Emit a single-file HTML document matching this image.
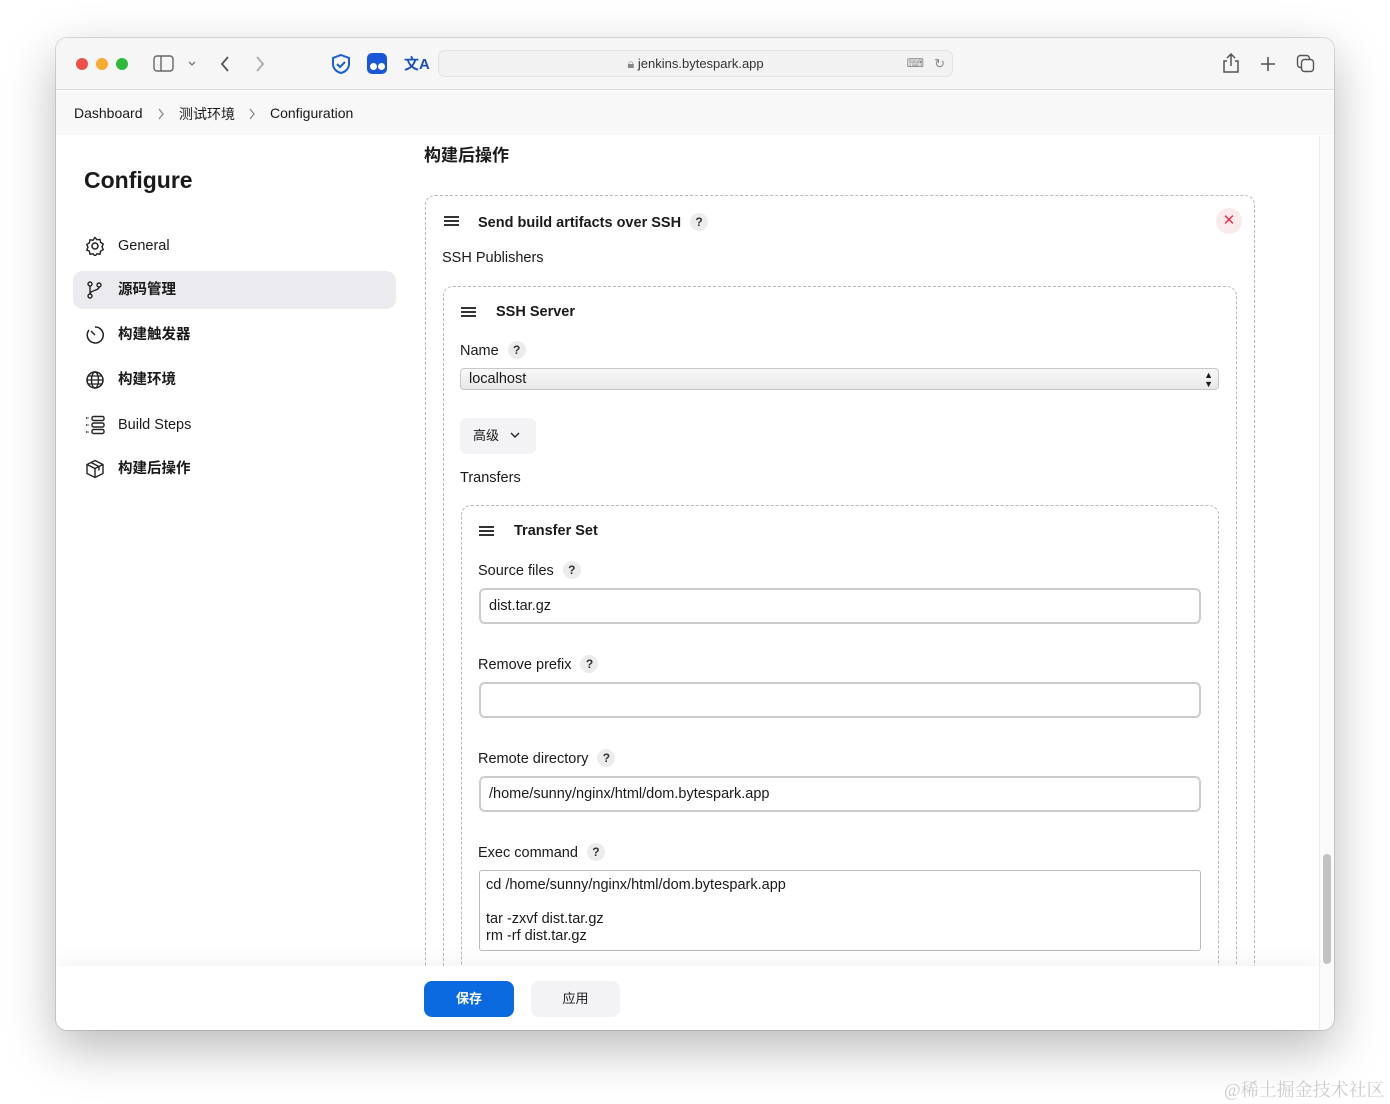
<!DOCTYPE html>
<html><head><meta charset="utf-8">
<style>
*{box-sizing:border-box;margin:0;padding:0}
body{width:1390px;height:1104px;background:#fff;font-family:"Liberation Sans","Noto Sans CJK SC",sans-serif;color:#1a1a1a;position:relative;overflow:hidden;font-size:14.5px}
.win{position:absolute;left:56px;top:38px;width:1278px;height:992px;border-radius:11px;background:#fff;overflow:hidden;box-shadow:0 18px 50px rgba(0,0,0,.28),0 0 0 1px rgba(0,0,0,.12)}
.tb{position:absolute;left:0;top:0;width:100%;height:52px;background:#f6f6f6;border-bottom:1px solid #dcdcdc}
.dot{position:absolute;top:20px;width:12px;height:12px;border-radius:50%}
.abs{position:absolute}
.url{position:absolute;left:382px;top:12px;width:515px;height:27px;border:1px solid #e2e2e2;border-radius:7px;background:#f2f2f2;font-size:13px;color:#333;text-align:center;line-height:25px}
.bc{position:absolute;left:0;top:53px;width:100%;height:44px;background:#f8f8f9;font-size:14px}
.side{font-size:14.5px}
.nav{position:absolute;left:17px;width:323px;height:38px;border-radius:10px;line-height:38px;padding-left:45px}
.nav svg{position:absolute;left:12px;top:9px}
.dash{position:absolute;border:1.5px dashed #b8b8b8;border-radius:10px}
.q{display:inline-block;width:18px;height:18px;border-radius:50%;background:#ececec;font-size:12px;text-align:center;line-height:18px;font-weight:bold;color:#333;vertical-align:1px;margin-left:9px}
.lbl{position:absolute;font-size:14.5px}
.inp{position:absolute;left:423px;width:722px;height:36px;border:2px solid #ccc;border-radius:6px;font-size:14.5px;line-height:32px;padding-left:8px}
.ham{position:absolute;width:15px;height:10px;border-top:2px solid #333;border-bottom:2px solid #333}
.ham:after{content:"";position:absolute;left:0;right:0;top:2px;border-top:2px solid #333}
.b{font-weight:bold}
</style></head><body>
<div class="win">
 <div class="tb">
  <div class="dot" style="left:20px;background:#ee4f48"></div>
  <div class="dot" style="left:40px;background:#f5ac2f"></div>
  <div class="dot" style="left:60px;background:#2ebb3c"></div>
  <svg class="abs" style="left:97px;top:17px" width="22" height="18" viewBox="0 0 22 18"><rect x="1" y="1" width="19" height="15" rx="3" fill="none" stroke="#666" stroke-width="1.4"/><line x1="8" y1="1" x2="8" y2="16" stroke="#666" stroke-width="1.4"/></svg>
  <svg class="abs" style="left:131px;top:22px" width="10" height="8"><path d="M2 2l3 3 3-3" fill="none" stroke="#777" stroke-width="1.3"/></svg>
  <svg class="abs" style="left:163px;top:16px" width="12" height="20"><path d="M9 3L3 10l6 7" fill="none" stroke="#555" stroke-width="1.8"/></svg>
  <svg class="abs" style="left:198px;top:16px" width="12" height="20"><path d="M3 3l6 7-6 7" fill="none" stroke="#aaa" stroke-width="1.8"/></svg>
  <svg class="abs" style="left:274px;top:15px" width="22" height="22" viewBox="0 0 22 22"><path d="M11 2l8 3v6c0 5-4 8-8 9-4-1-8-4-8-9V5z" fill="none" stroke="#1a5fd6" stroke-width="2"/><path d="M7 11l3 3 5-5" fill="none" stroke="#1a5fd6" stroke-width="2"/></svg>
  <div class="abs" style="left:311px;top:15px;width:20px;height:21px;border-radius:5px;background:#1a56d8"></div>
  <div class="abs" style="left:314px;top:25px;width:7px;height:7px;border-radius:50%;background:#fff"></div>
  <div class="abs" style="left:322px;top:25px;width:7px;height:7px;border-radius:50%;background:#fff"></div>
  <div class="abs" style="left:348px;top:15px;font-size:15px;font-weight:bold;color:#1a4fb5">文A</div>
  <div class="url"><span style="color:#888">🔒︎</span> jenkins.bytespark.app
   <span class="abs" style="right:28px;top:0;color:#888;font-size:12px">⌨</span><span class="abs" style="right:7px;top:0;color:#888">↻</span></div>
  <svg class="abs" style="left:1166px;top:14px" width="18" height="22"><path d="M9 2v12M5 6l4-4 4 4M5 9H2v11h14V9h-3" fill="none" stroke="#555" stroke-width="1.5"/></svg>
  <svg class="abs" style="left:1203px;top:17px" width="18" height="18"><path d="M9 2v14M2 9h14" stroke="#555" stroke-width="1.6"/></svg>
  <svg class="abs" style="left:1240px;top:16px" width="20" height="20"><rect x="1.5" y="1.5" width="12" height="12" rx="3" fill="none" stroke="#555" stroke-width="1.4"/><rect x="5.5" y="5.5" width="12" height="12" rx="3" fill="#f6f6f6" stroke="#555" stroke-width="1.4"/></svg>
 </div>
 <div class="bc">
  <span class="abs" style="left:18px;top:14px">Dashboard</span>
  <svg class="abs" style="left:101px;top:17px" width="8" height="12"><path d="M2 1l4 5-4 5" fill="none" stroke="#888" stroke-width="1.3"/></svg>
  <span class="abs" style="left:123px;top:13px">测试环境</span>
  <svg class="abs" style="left:192px;top:17px" width="8" height="12"><path d="M2 1l4 5-4 5" fill="none" stroke="#888" stroke-width="1.3"/></svg>
  <span class="abs" style="left:214px;top:14px">Configuration</span>
 </div>
 <div class="abs b" style="left:28px;top:129px;font-size:23px">Configure</div>
 <div class="side">
  <div class="nav" style="top:189px"><svg width="20" height="20" viewBox="0 0 20 20"><circle cx="10" cy="10" r="3" fill="none" stroke="#222" stroke-width="1.5"/><path d="M10 1.5l2 2.3 3-.4.6 3 2.6 1.6-1.2 2.8 1.2 2.8-2.6 1.6-.6 3-3-.4-2 2.3-2-2.3-3 .4-.6-3L1.8 14l1.2-2.8L1.8 8.4 4.4 6.8l.6-3 3 .4z" fill="none" stroke="#222" stroke-width="1.4"/></svg>General</div>
  <div class="nav" style="top:233px;background:#ebebef"><svg width="20" height="20" viewBox="0 0 20 20"><circle cx="5" cy="4" r="2" fill="none" stroke="#222" stroke-width="1.4"/><circle cx="5" cy="16" r="2" fill="none" stroke="#222" stroke-width="1.4"/><circle cx="14" cy="5" r="2" fill="none" stroke="#222" stroke-width="1.4"/><path d="M5 6v8M14 7c0 4-9 3-9 7" fill="none" stroke="#222" stroke-width="1.4"/></svg><b>源码管理</b></div>
  <div class="nav" style="top:278px"><svg width="20" height="20" viewBox="0 0 20 20"><path d="M10 2a8 8 0 1 1-6 3" fill="none" stroke="#222" stroke-width="1.5"/><path d="M6 6l4 4" stroke="#222" stroke-width="1.5"/></svg><b>构建触发器</b></div>
  <div class="nav" style="top:323px"><svg width="20" height="20" viewBox="0 0 20 20"><circle cx="10" cy="10" r="8" fill="none" stroke="#222" stroke-width="1.5"/><ellipse cx="10" cy="10" rx="3.5" ry="8" fill="none" stroke="#222" stroke-width="1.4"/><path d="M2 10h16M3.5 6h13M3.5 14h13" stroke="#222" stroke-width="1.3"/></svg><b>构建环境</b></div>
  <div class="nav" style="top:368px"><svg width="20" height="20" viewBox="0 0 20 20"><path d="M1 3h3M1 10h3M1 17h3" stroke="#222" stroke-width="1.6" stroke-dasharray="1.5 1"/><rect x="7" y="1.5" width="12" height="4" rx="1.5" fill="none" stroke="#222" stroke-width="1.4"/><rect x="7" y="8" width="12" height="4" rx="1.5" fill="none" stroke="#222" stroke-width="1.4"/><rect x="7" y="14.5" width="12" height="4" rx="1.5" fill="none" stroke="#222" stroke-width="1.4"/></svg>Build Steps</div>
  <div class="nav" style="top:412px"><svg width="20" height="20" viewBox="0 0 20 20"><path d="M10 1.5l8 4v9l-8 4-8-4v-9z M2 5.5l8 4 8-4 M10 9.5v9 M6 3.5l8 4v4" fill="none" stroke="#222" stroke-width="1.4"/></svg><b>构建后操作</b></div>
 </div>
 <div class="abs" style="left:0;top:98px;width:1263px;height:830px;overflow:hidden">
  <div class="abs b" style="left:368px;top:5px;font-size:17px">构建后操作</div>
  <div class="dash" style="left:369px;top:59px;width:830px;height:900px"></div>
  <div class="ham" style="left:388px;top:80px"></div>
  <div class="lbl b" style="left:422px;top:77px">Send build artifacts over SSH<span class="q">?</span></div>
  <div class="abs" style="left:1160px;top:72px;width:26px;height:26px;border-radius:50%;background:#fbeaec;color:#e0334a;text-align:center;line-height:26px;font-size:15px">✕</div>
  <div class="lbl" style="left:386px;top:114px">SSH Publishers</div>
  <div class="dash" style="left:387px;top:150px;width:794px;height:800px"></div>
  <div class="ham" style="left:405px;top:171px"></div>
  <div class="lbl b" style="left:440px;top:168px">SSH Server</div>
  <div class="lbl" style="left:404px;top:205px">Name<span class="q">?</span></div>
  <div class="abs" style="left:404px;top:232px;width:759px;height:22px;border:1px solid #c8c8c8;border-radius:4px;background:linear-gradient(#f8f8f8,#e8e8e8);font-size:14.5px;line-height:20px;padding-left:8px">localhost<span class="abs" style="right:5px;font-size:9px;line-height:9px;top:2px">▲<br>▼</span></div>
  <div class="abs" style="left:404px;top:282px;width:76px;height:36px;border-radius:7px;background:#f3f3f5;font-size:13px;line-height:36px;padding-left:13px">高级 <svg width="12" height="10" style="margin-left:6px"><path d="M2 3l4 4 4-4" fill="none" stroke="#222" stroke-width="1.4"/></svg></div>
  <div class="lbl" style="left:404px;top:334px">Transfers</div>
  <div class="dash" style="left:405px;top:369px;width:758px;height:600px"></div>
  <div class="ham" style="left:423px;top:390px"></div>
  <div class="lbl b" style="left:458px;top:387px">Transfer Set</div>
  <div class="lbl" style="left:422px;top:425px">Source files<span class="q">?</span></div>
  <div class="inp" style="top:452px">dist.tar.gz</div>
  <div class="lbl" style="left:422px;top:519px">Remove prefix<span class="q">?</span></div>
  <div class="inp" style="top:546px"></div>
  <div class="lbl" style="left:422px;top:613px">Remote directory<span class="q">?</span></div>
  <div class="inp" style="top:640px">/home/sunny/nginx/html/dom.bytespark.app</div>
  <div class="lbl" style="left:422px;top:707px">Exec command<span class="q">?</span></div>
  <div class="abs" style="left:423px;top:734px;width:722px;height:81px;border:1px solid #bbb;border-radius:3px;font-size:14.5px;line-height:17px;padding:6px 6px">cd /home/sunny/nginx/html/dom.bytespark.app<br><br>tar -zxvf dist.tar.gz<br>rm -rf dist.tar.gz</div>
 </div>
 <div class="abs" style="left:0;top:928px;width:1263px;height:64px;background:#fff;box-shadow:0 -8px 14px rgba(0,0,0,.04)"></div>
 <div class="abs" style="left:368px;top:943px;width:90px;height:36px;border-radius:8px;background:#0b6adf;color:#fff;text-align:center;line-height:36px;font-size:13px;font-weight:bold">保存</div>
 <div class="abs" style="left:475px;top:943px;width:89px;height:36px;border-radius:8px;background:#f3f3f5;text-align:center;line-height:36px;font-size:13px">应用</div>
 <div class="abs" style="left:1263px;top:98px;width:15px;height:894px;background:#fafafa;border-left:1px solid #ececec"></div>
 <div class="abs" style="left:1267px;top:816px;width:8px;height:110px;border-radius:4px;background:#c2c2c2"></div>
</div>
<div class="abs" style="left:1224px;top:1076px;font-size:18px;color:#ccc;font-family:'Liberation Serif','Noto Serif CJK SC',serif">@稀土掘金技术社区</div>
</body></html>
